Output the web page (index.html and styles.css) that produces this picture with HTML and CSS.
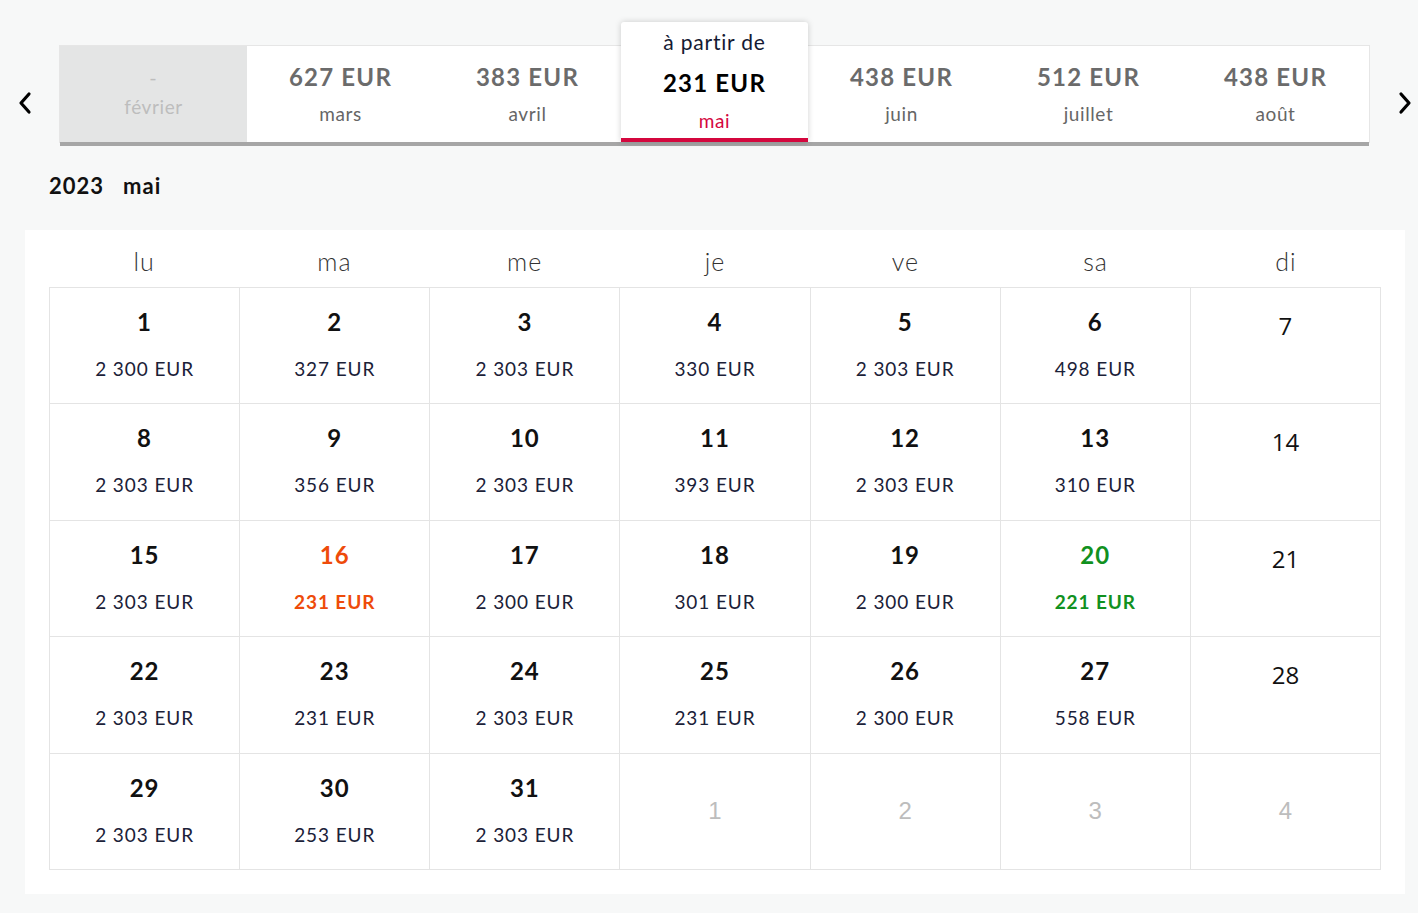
FILE: index.html
```html
<!DOCTYPE html>
<html lang="fr">
<head>
<meta charset="utf-8">
<link rel="stylesheet" href="styles.css">
</head>
<body>
<div class="page">
  <div class="months">
    <button class="arrow"><svg width="16" height="24" viewBox="0 0 16 24"><path d="M12 3 L4 12 L12 21" fill="none" stroke="#000" stroke-width="3.2" stroke-linecap="round" stroke-linejoin="round"/></svg></button>
    <div class="tabs">
      <div class="tab disabled"><div class="price">-</div><div class="mname">février</div></div>
      <div class="tab"><div class="price">627 EUR</div><div class="mname">mars</div></div>
      <div class="tab"><div class="price">383 EUR</div><div class="mname">avril</div></div>
      <div class="tab active"><div class="from">à partir de</div><div class="price">231 EUR</div><div class="mname">mai</div></div>
      <div class="tab"><div class="price">438 EUR</div><div class="mname">juin</div></div>
      <div class="tab"><div class="price">512 EUR</div><div class="mname">juillet</div></div>
      <div class="tab"><div class="price">438 EUR</div><div class="mname">août</div></div>
    </div>
    <button class="arrow"><svg width="16" height="24" viewBox="0 0 16 24"><path d="M4 3 L12 12 L4 21" fill="none" stroke="#000" stroke-width="3.2" stroke-linecap="round" stroke-linejoin="round"/></svg></button>
  </div>
  <div class="title"><span>2023</span><span>mai</span></div>
  <div class="panel">
    <div class="weekdays">
      <div>lu</div><div>ma</div><div>me</div><div>je</div><div>ve</div><div>sa</div><div>di</div>
    </div>
    <div class="grid">
      <div class="cell"><div class="d">1</div><div class="p">2 300 EUR</div></div>
      <div class="cell"><div class="d">2</div><div class="p">327 EUR</div></div>
      <div class="cell"><div class="d">3</div><div class="p">2 303 EUR</div></div>
      <div class="cell"><div class="d">4</div><div class="p">330 EUR</div></div>
      <div class="cell"><div class="d">5</div><div class="p">2 303 EUR</div></div>
      <div class="cell"><div class="d">6</div><div class="p">498 EUR</div></div>
      <div class="cell sun"><div class="d">7</div></div>

      <div class="cell"><div class="d">8</div><div class="p">2 303 EUR</div></div>
      <div class="cell"><div class="d">9</div><div class="p">356 EUR</div></div>
      <div class="cell"><div class="d">10</div><div class="p">2 303 EUR</div></div>
      <div class="cell"><div class="d">11</div><div class="p">393 EUR</div></div>
      <div class="cell"><div class="d">12</div><div class="p">2 303 EUR</div></div>
      <div class="cell"><div class="d">13</div><div class="p">310 EUR</div></div>
      <div class="cell sun"><div class="d">14</div></div>

      <div class="cell"><div class="d">15</div><div class="p">2 303 EUR</div></div>
      <div class="cell selected"><div class="d">16</div><div class="p">231 EUR</div></div>
      <div class="cell"><div class="d">17</div><div class="p">2 300 EUR</div></div>
      <div class="cell"><div class="d">18</div><div class="p">301 EUR</div></div>
      <div class="cell"><div class="d">19</div><div class="p">2 300 EUR</div></div>
      <div class="cell cheap"><div class="d">20</div><div class="p">221 EUR</div></div>
      <div class="cell sun"><div class="d">21</div></div>

      <div class="cell"><div class="d">22</div><div class="p">2 303 EUR</div></div>
      <div class="cell"><div class="d">23</div><div class="p">231 EUR</div></div>
      <div class="cell"><div class="d">24</div><div class="p">2 303 EUR</div></div>
      <div class="cell"><div class="d">25</div><div class="p">231 EUR</div></div>
      <div class="cell"><div class="d">26</div><div class="p">2 300 EUR</div></div>
      <div class="cell"><div class="d">27</div><div class="p">558 EUR</div></div>
      <div class="cell sun"><div class="d">28</div></div>

      <div class="cell"><div class="d">29</div><div class="p">2 303 EUR</div></div>
      <div class="cell"><div class="d">30</div><div class="p">253 EUR</div></div>
      <div class="cell"><div class="d">31</div><div class="p">2 303 EUR</div></div>
      <div class="cell other"><div class="d">1</div></div>
      <div class="cell other"><div class="d">2</div></div>
      <div class="cell other"><div class="d">3</div></div>
      <div class="cell other"><div class="d">4</div></div>
    </div>
  </div>
</div>
</body>
</html>
```

FILE: styles.css
```css
* { box-sizing: border-box; }
html, body { margin: 0; padding: 0; }
body {
  background: #f7f8f8;
  font-family: Lato, "Open Sans", "Liberation Sans", sans-serif;
  color: #111;
  width: 1418px;
  height: 913px;
  overflow: hidden;
}
.page { padding-top: 22px; }

.months {
  display: flex;
  align-items: flex-end;
  height: 120px;
}
.arrow {
  width: 60px;
  height: 120px;
  border: none;
  background: none;
  padding: 0;
  display: flex;
  align-items: center;
  justify-content: center;
  padding-top: 42px;
}
.arrow:first-child { justify-content: flex-start; padding-left: 17px; }
.arrow:last-child { width: 49px; justify-content: flex-end; padding-right: 5px; }

.tabs {
  display: flex;
  height: 96px;
  background: #fff;
  box-shadow: 0 4px 0 #a6a6a6, 0 0 0 1px #e6e6e6;
  align-items: flex-end;
}
.tab {
  width: 187px;
  height: 96px;
  display: flex;
  flex-direction: column;
  align-items: center;
  background: #fff;
  padding-top: 15px;
}
.tab.disabled { background: #e4e5e5; }
.tab .price {
  font-size: 24px;
  font-weight: 700;
  color: #6b6b6b;
  line-height: 32px;
  letter-spacing: 1.2px;
}
.tab .mname {
  font-size: 19px;
  color: #666;
  line-height: 24px;
  margin-top: 9px;
  letter-spacing: 0.6px;
}
.tab.disabled .price { color: #bdbdbd; font-weight: 400; font-size: 20px; }
.tab.disabled .mname { color: #bdbdbd; margin-top: 2px; }

.tab.active {
  height: 120px;
  padding-top: 5px;
  border-bottom: 4px solid #d4073e;
  border-radius: 3px 3px 0 0;
  box-shadow: 0 0 6px rgba(0,0,0,0.18);
  position: relative;
  z-index: 1;
}
.tab.active .from { font-size: 21px; color: #141a33; line-height: 30px; letter-spacing: 0.8px; }
.tab.active .price { color: #000; margin-top: 10px; }
.tab.active .mname { color: #d4073e; margin-top: 10px; }

.title {
  padding: 32px 0 0 49px;
  font-size: 22px;
  font-weight: 700;
  letter-spacing: 1px;
  display: flex;
  gap: 19px;
  height: 88px;
  line-height: 24px;
}

.panel {
  margin: 0 13px 0 25px;
  background: #fff;
  padding: 0 24px 24px 24px;
}
.weekdays {
  display: grid;
  grid-template-columns: repeat(7, 1fr);
  height: 57px;
  align-items: center;
  text-align: center;
  font-size: 25px;
  color: #333;
  font-weight: 300;
  letter-spacing: 1px;
  padding-top: 4px;
}
.grid {
  display: grid;
  grid-template-columns: repeat(7, 1fr);
  grid-auto-rows: 116.4px;
  border-top: 1px solid #e4e4e4;
  border-left: 1px solid #e4e4e4;
}
.cell {
  border-right: 1px solid #e4e4e4;
  border-bottom: 1px solid #e4e4e4;
  display: flex;
  flex-direction: column;
  align-items: center;
  padding-top: 19px;
}
.cell .d {
  font-size: 24px;
  font-weight: 700;
  line-height: 30px;
  color: #111;
  letter-spacing: 1px;
}
.cell .p {
  font-size: 19px;
  color: #1b2138;
  line-height: 24px;
  margin-top: 20px;
  letter-spacing: 0.9px;
}
.cell.sun .d { font-weight: 400; padding-top: 4px; font-family: "Open Sans", sans-serif; letter-spacing: 0; }
.cell.other { justify-content: center; padding-top: 0; padding-bottom: 0; }
.cell.other .d { font-weight: 300; color: #bdbdbd; font-family: "Liberation Sans", sans-serif; letter-spacing: 0; }
.cell.selected .d, .cell.selected .p { color: #ee4b0a; font-weight: 700; }
.cell.cheap .d, .cell.cheap .p { color: #11911f; font-weight: 700; }
```
